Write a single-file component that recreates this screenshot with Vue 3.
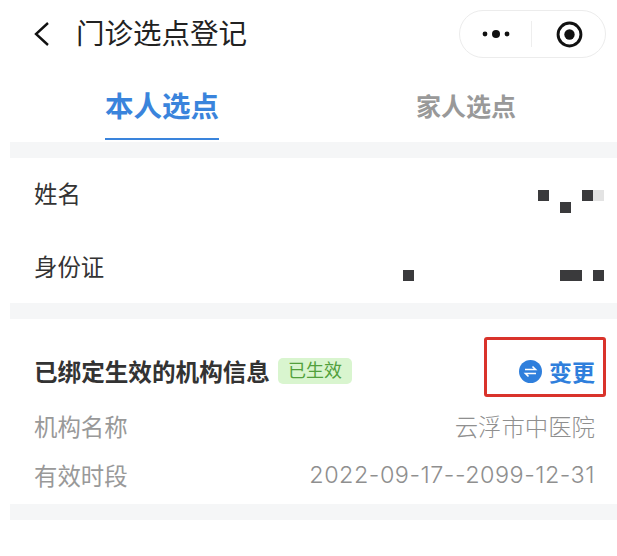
<script setup>
const rows = [
  { label: '机构名称', value: '云浮市中医院', spaced: false },
  { label: '有效时段', value: '2022-09-17--2099-12-31', spaced: true },
]
</script>

<template>
  <div class="page">
    <header class="nav">
      <svg class="back" width="18" height="26" viewBox="0 0 18 26"><path d="M16 2 4 13l12 11" fill="none" stroke="#111" stroke-width="2.4"/></svg>
      <h1 class="title">门诊选点登记</h1>
      <div class="capsule">
        <svg width="32" height="10" viewBox="0 0 32 10"><circle cx="4" cy="5" r="2.4" fill="#111"/><circle cx="15" cy="5" r="4" fill="#111"/><circle cx="26" cy="5" r="2.4" fill="#111"/></svg>
        <span class="divider"></span>
        <svg width="27" height="27" viewBox="0 0 26 26"><circle cx="13" cy="13" r="11" fill="none" stroke="#111" stroke-width="2.8"/><circle cx="13" cy="13" r="5" fill="#111"/></svg>
      </div>
    </header>

    <nav class="tabs">
      <div class="tab active">本人选点</div>
      <div class="tab">家人选点</div>
    </nav>

    <div class="band"></div>

    <section class="person">
      <div class="person-row first">
        <span class="person-label">姓名</span>
        <div class="mask mask-name">
          <i class="sq"></i><i class="sq low"></i><i class="sq"></i><i class="sq pale"></i>
        </div>
      </div>
      <div class="person-row">
        <span class="person-label">身份证</span>
        <div class="mask mask-id">
          <i class="sq"></i><i class="sq wide"></i><i class="sq"></i>
        </div>
      </div>
    </section>

    <div class="band"></div>

    <section class="org">
      <div class="org-head">
        <div class="org-title">
          <strong>已绑定生效的机构信息</strong>
          <span class="tag">已生效</span>
        </div>
        <div class="change">
          <svg width="23" height="23" viewBox="0 0 23 23"><circle cx="11.5" cy="11.5" r="11.5" fill="#2f7fdc"/><path d="M6 9.500h10.500l-3-3M17 13.500H6.500l3 3" fill="none" stroke="#fff" stroke-width="1.600"/></svg>
          <span>变更</span>
        </div>
      </div>
      <div v-for="r in rows" :key="r.label" class="org-row">
        <span>{{ r.label }}</span>
        <span class="org-value" :class="{ spaced: r.spaced }">{{ r.value }}</span>
      </div>
    </section>

    <div class="band"></div>
  </div>
</template>

<style>
html, body { margin: 0; background: #fff; }
</style>

<style scoped>
.page {
  width: 617px;
  height: 556px;
  overflow: hidden;
  background: #fff;
  font-family: "Liberation Sans", "Noto Sans CJK SC", sans-serif;
  box-sizing: border-box;
}
.nav {
  height: 68px;
  display: flex;
  align-items: center;
  padding: 0 11px 0 32px;
  box-sizing: border-box;
}
.back { flex: none; }
.title {
  margin: 0 0 0 26px;
  font-size: 28.500px;
  font-weight: 400;
  color: #222;
  line-height: 1;
  flex: 1;
}
.capsule {
  width: 147px;
  height: 48px;
  border: 1px solid #ececec;
  border-radius: 24px;
  box-sizing: border-box;
  display: flex;
  align-items: center;
  padding-left: 21px;
}
.divider {
  width: 1px;
  height: 26px;
  background: #eee;
  margin: 0 24px 0 18px;
}
.tabs {
  height: 74px;
  display: flex;
}
.tab {
  font-size: 28.500px;
  font-weight: 700;
  color: #999;
  line-height: 32px;
  height: 72px;
  box-sizing: border-box;
  padding-top: 23px;
  margin-left: 105px;
  width: 114px;
  white-space: nowrap;
}
.tab:last-child {
  font-size: 25px;
  margin-left: 197px;
  width: 100px;
}
.tab.active {
  color: #3a84dc;
  border-bottom: 2px solid #3a84dc;
}
.band {
  height: 16px;
  margin-left: 10px;
  background: #f5f6f7;
}
.person {
  height: 145px;
  box-sizing: border-box;
}
.person-row {
  height: 73px;
  display: flex;
  align-items: center;
  padding-left: 34px;
  box-sizing: border-box;
}
.person-row.first { height: 75px; }
.person-label {
  font-size: 23.400px;
  color: #333;
  line-height: 1;
}
.person-row.first .person-label { margin-top: 1px; }
.person-row:not(.first) .person-label { margin-top: -1px; }
.mask {
  margin-left: auto;
  display: flex;
  margin-right: 13px;
}
.mask-name { margin-top: 12px; height: 24px; }
.mask-id { margin-top: 11px; }
.sq {
  display: block;
  width: 11px;
  height: 11px;
  background: #3a3a3c;
}
.mask-name .sq.low { margin: 12px 11px 0; }
.mask-name .sq.pale { background: #e3e3e3; }
.mask-id .sq:first-child { margin-right: 146px; }
.mask-id .sq.wide { width: 22px; margin-right: 11px; }
.org {
  height: 185px;
  padding: 18px 11px 0 34px;
  box-sizing: border-box;
}
.org-head {
  display: flex;
  align-items: center;
  justify-content: space-between;
  height: 60px;
}
.org-title {
  display: flex;
  align-items: center;
  font-size: 23.600px;
  color: #333;
  margin-top: 8px;
}
.org-title strong { font-weight: 700; }
.tag {
  margin-left: 8px;
  width: 74px;
  height: 26px;
  line-height: 26px;
  border-radius: 5px;
  background: #d9f5cf;
  color: #52a03c;
  font-size: 18px;
  text-align: center;
}
.change {
  width: 122px;
  height: 60px;
  border: 3px solid #d9332b;
  border-radius: 3px;
  box-sizing: border-box;
  display: flex;
  align-items: center;
  justify-content: flex-end;
  gap: 7px;
  padding: 8px 8px 0 0;
  color: #2f7fdc;
  font-size: 23px;
  font-weight: 700;
}
.org-row {
  display: flex;
  justify-content: space-between;
  align-items: center;
  height: 49px;
  padding-right: 11px;
  color: #999;
  font-size: 23.400px;
}
.org-head + .org-row { margin-top: 4px; }
.org-value {
  font-family: Inter, "Noto Sans CJK SC", sans-serif;
  font-weight: 300;
  color: #8f8f8f;
}
.org-value.spaced { letter-spacing: 0.5px; }
</style>
